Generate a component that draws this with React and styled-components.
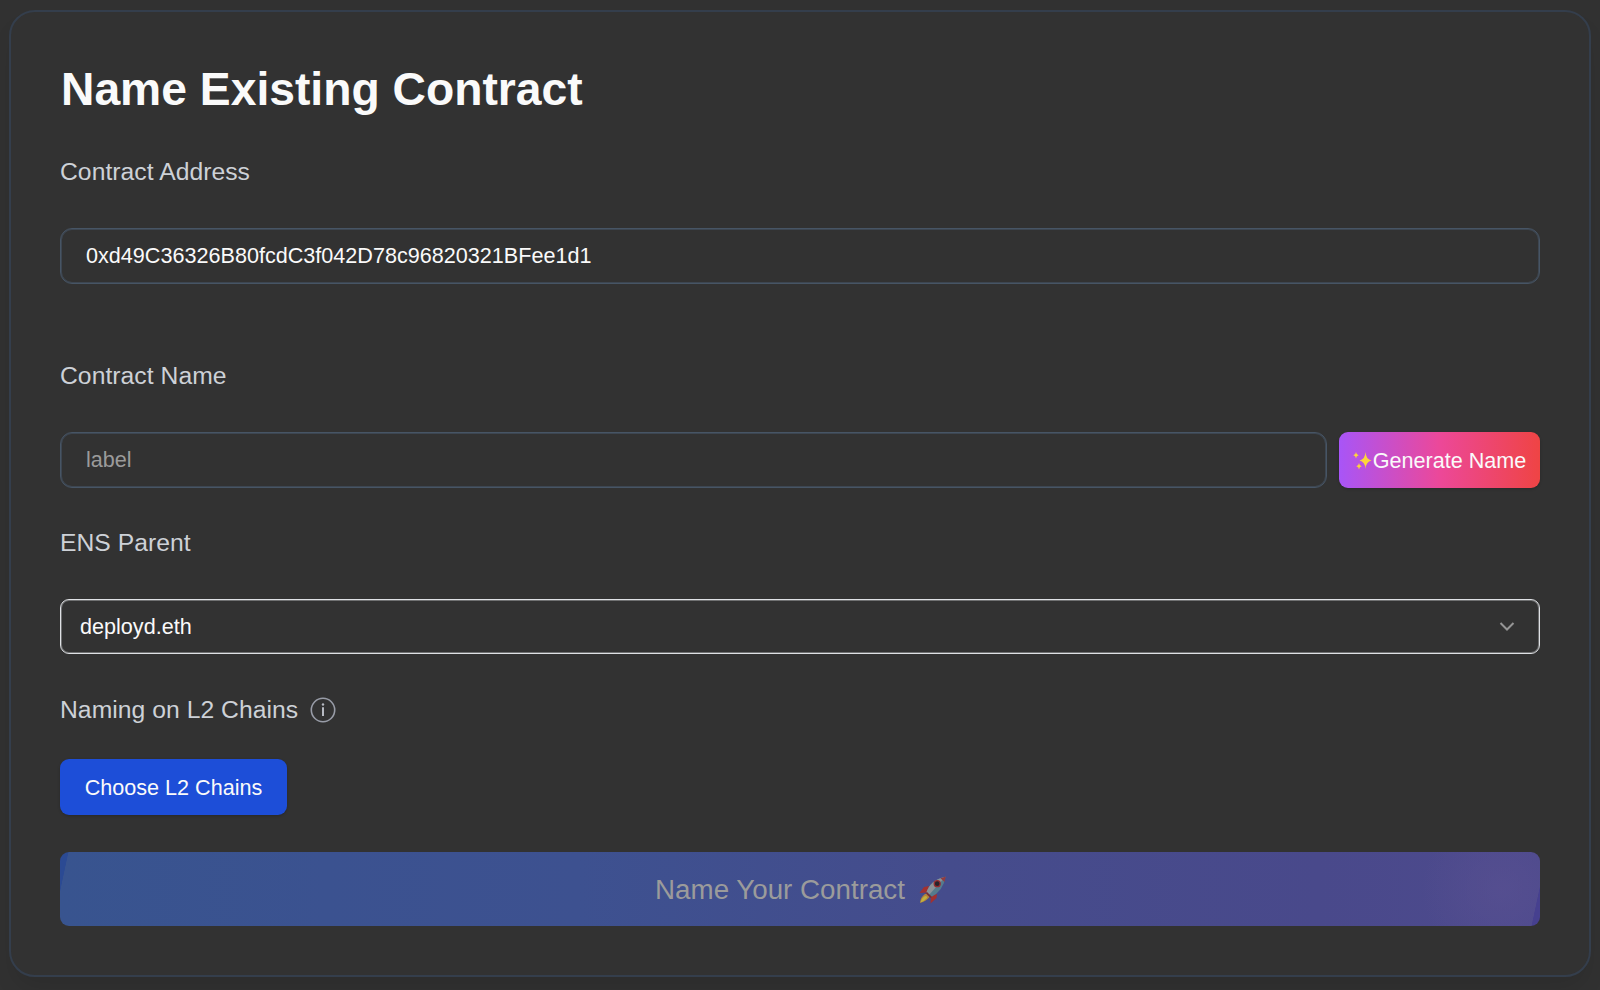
import React from "react";
import styled, { createGlobalStyle } from "styled-components";

const Global = createGlobalStyle`
  *, *::before, *::after { box-sizing: border-box; }
  body { margin: 0; background: #313131; font-family: "Liberation Sans", Arial, sans-serif; color: #fafafa; }
`;
const Page = styled.div`
  height: 990px; padding: 10px 9px 13px 9px; overflow: hidden;
`;
const Card = styled.main`
  height: 967px; padding: 48px 49px; border: 2px solid #343e4c; border-radius: 26px;
  background: #323232; box-shadow: 0 15px 23px -5px rgba(0, 0, 0, 0.1);
  display: flex; flex-direction: column; align-items: stretch;
`;
const Title = styled.h1`
  margin: 0 0 28px; padding-left: 1px; height: 56px; line-height: 58px; font-size: 46.25px; font-weight: 700;
  white-space: nowrap;
`;
const Label = styled.label`
  display: flex; align-items: center; gap: 12px; height: 56px; margin-bottom: ${(p) => p.$gap || 28}px;
  font-size: 24.7px; letter-spacing: 0.04px; color: #cdd1d7; white-space: nowrap;
`;
const Row = styled.div`
  display: flex; gap: 12px; margin-bottom: ${(p) => p.$gap}px;
`;
const Input = styled.input`
  flex: 1; min-width: 0; height: 56px; padding: 0 25px; border: 1px solid #475565; border-radius: 12px;
  box-shadow: inset 0 0 0 1px rgba(71, 88, 108, 0.55);
  background: transparent; color: #fafafa; font: 21.6px "Liberation Sans", Arial, sans-serif; outline: none;
  &::placeholder { color: #9b9b9b; opacity: 1; }
`;
const Select = styled.button`
  flex: 1; display: flex; align-items: center; justify-content: space-between; height: 55px;
  padding: 0 23px 0 19px; border: 1px solid #dfe1e5; border-radius: 9px; background: transparent;
  box-shadow: inset 0 0 0 1px rgba(229, 231, 235, 0.35);
  color: #fafafa; font: 21.6px "Liberation Sans", Arial, sans-serif;
`;
const Button = styled.button`
  display: flex; align-items: center; justify-content: center; width: ${(p) => p.$width}px; height: 56px;
  padding: 1px 0 0; border: 0; border-radius: 9px; background: ${(p) => p.$fill}; color: #fafafa;
  font: 21.6px "Liberation Sans", Arial, sans-serif; white-space: nowrap;
  box-shadow: 0 1px 3px rgba(0, 0, 0, 0.2);
`;
const Submit = styled.button`
  display: flex; align-items: center; justify-content: center; gap: 14px; height: 74px; padding: 1px 0 0 2px;
  border: 0; border-radius: 9px; color: #9b9b9b; font: 27.75px "Liberation Sans", Arial, sans-serif;
  background:
    linear-gradient(102deg, #2b4a93 8px, transparent 8.6px) 0 0 / 40px 74px no-repeat,
    linear-gradient(282deg, #46408f 8px, transparent 8.6px) 100% 100% / 40px 74px no-repeat,
    radial-gradient(circle 80px at calc(100% - 38px) 50%, rgba(88, 80, 145, 0.7), transparent),
    linear-gradient(90deg, #38548f 0%, #3b5290 18%, #3d5190 35%, #454c8c 60%, #49498b 85%, #4e4a8d 100%);
`;

const Sparkles = () => (
  <svg width="20" height="22" viewBox="0 0 20 22" fill="#fdd53b">
    <path d="M12.5 2Q13 9.500 18.500 10.500Q13 11.500 12.500 19Q12 11.500 6.500 10.500Q12 9.500 12.500 2Z" />
    <path d="M3 2Q3.300 4.700 5.700 5.200Q3.300 5.700 3 8.500Q2.700 5.700 0.300 5.200Q2.700 4.700 3 2Z" />
    <path d="M6 13Q6.300 15.700 8.700 16.200Q6.300 16.700 6 19.500Q5.700 16.700 3.300 16.200Q5.700 15.700 6 13Z" />
  </svg>
);
const Rocket = () => (
  <svg width="28" height="28" viewBox="0 0 28 28">
    <path d="M10 10L5 11L0.500 17L8 16.500Z M18 18L17.500 22L11.500 27.500L12 20Z" fill="#a23130" />
    <path d="M6 18Q10 17 10.500 21Q7 25.500 1 27Q1.500 21 6 18Z" fill="#b5833a" />
    <path d="M6 20Q8.500 20 8 22Q5.500 25 1.500 26.500Q2.500 22 6 20Z" fill="#c0b13f" />
    <path d="M7 17.500Q11 4 26.500 0.800Q24.500 15 11.500 21.500Z" fill="#557b8d" />
    <path d="M7 17.500Q11 4 26.500 0.800L9.500 19.500Z" fill="#8b9298" />
    <path d="M21.500 2.300L26.800 0.500L25.500 6Z" fill="#923b40" />
    <path d="M6.500 17L11.500 22L13 21L8 16Z" fill="#762d33" />
    <circle cx="18.200" cy="7.700" r="3" fill="#27232b" stroke="#962c30" strokeWidth="1.300" />
  </svg>
);
const Info = () => (
  <svg width="26" height="26" viewBox="0 0 26 26" fill="none" stroke="#989ca7" strokeWidth="1.600">
    <circle cx="13" cy="13" r="11.700" />
    <path d="M13 10.300V19" strokeWidth="2" stroke="#b7bac2" />
    <circle cx="13" cy="7.500" r="1.200" fill="#b7bac2" stroke="none" />
  </svg>
);
const Chevron = () => (
  <svg width="18" height="18" viewBox="0 0 18 18" fill="none" stroke="#959595" strokeWidth="2">
    <path d="M2.500 5L9 11.500L15.500 5" />
  </svg>
);

export default function App() {
  return (
    <Page>
      <Global />
      <Card>
        <Title>Name Existing Contract</Title>
        <Label>Contract Address</Label>
        <Row $gap={64}><Input defaultValue="0xd49C36326B80fcdC3f042D78c96820321BFee1d1" /></Row>
        <Label>Contract Name</Label>
        <Row $gap={27}>
          <Input placeholder="label" />
          <Button $width={201} $fill="linear-gradient(90deg, #a855f7, #ec4899 50%, #ef4444)"><Sparkles />Generate Name</Button>
        </Row>
        <Label>ENS Parent</Label>
        <Row $gap={28}><Select>deployd.eth<Chevron /></Select></Row>
        <Label $gap={21}>Naming on L2 Chains <Info /></Label>
        <Row $gap={37}><Button $width={227} $fill="#1d4ed8">Choose L2 Chains</Button></Row>
        <Submit>Name Your Contract <Rocket /></Submit>
      </Card>
    </Page>
  );
}
